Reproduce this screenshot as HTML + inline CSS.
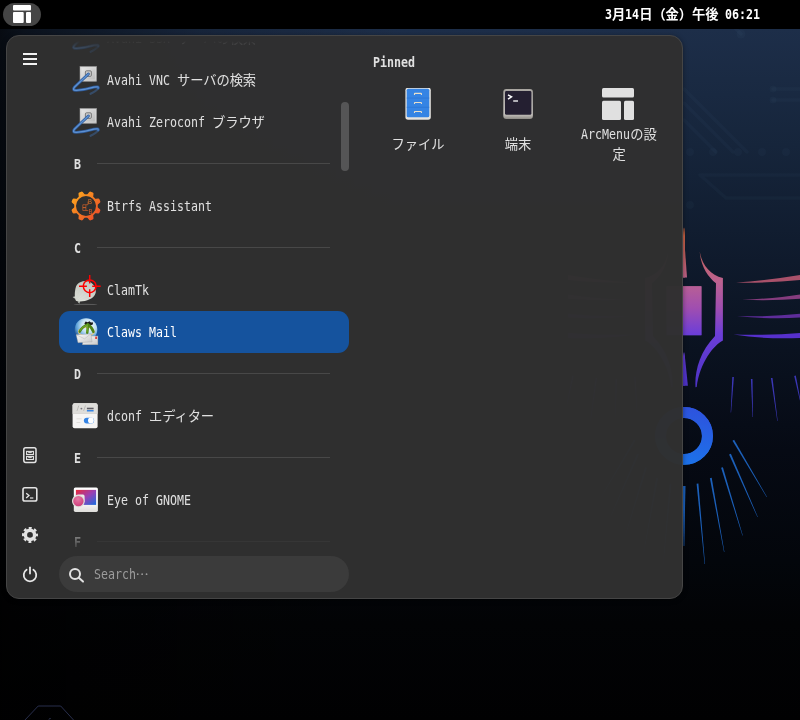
<!DOCTYPE html>
<html lang="ja">
<head>
<meta charset="utf-8">
<title>ArcMenu</title>
<style>
*{box-sizing:border-box;margin:0;padding:0}
html,body{width:800px;height:720px;overflow:hidden;background:#020306}
body{position:relative;font-family:"DejaVu Sans Mono","Liberation Mono","Noto Sans CJK JP",monospace;font-size:13px;color:#e0e0e0}
svg{display:block}
#wall{position:absolute;left:0;top:0;width:800px;height:720px}
.l{display:inline-block;white-space:pre;overflow:visible;line-height:1}
.l i{display:inline-block;font-style:normal;font-size:13.7px;transform:scaleX(0.8487);transform-origin:0 50%;white-space:pre}
.c{font-family:"Noto Sans CJK JP",sans-serif;font-size:13.3px;letter-spacing:-.1px;line-height:1}
#topbar{position:absolute;left:0;top:0;width:800px;height:29px;background:#000}
#actbtn{position:absolute;left:3px;top:3px;width:38px;height:23px;border-radius:12px;background:#454545}
#actbtn svg{position:absolute;left:10px;top:2px}
#clock{will-change:transform;position:absolute;left:605px;top:0;height:29px;line-height:29px;font-weight:bold;color:#fff;white-space:nowrap}
#menu{position:absolute;left:6px;top:35px;width:677px;height:564px;border-radius:13px;background:rgba(48,48,48,.985);border:1px solid #454545;box-shadow:0 1px 5px rgba(0,0,0,.4)}
#side .si{position:absolute;left:22px;width:16px;height:16px}
#list{position:absolute;left:59px;width:290px;overflow:hidden;-webkit-mask-image:linear-gradient(to bottom,rgba(0,0,0,0) 0,#000 26px,#000 calc(100% - 30px),rgba(0,0,0,.15) 100%);mask-image:linear-gradient(to bottom,rgba(0,0,0,0) 0,#000 26px,#000 calc(100% - 30px),rgba(0,0,0,.15) 100%)}
.row{position:absolute;left:0;width:290px;height:42px;border-radius:11px}
.row.sel{background:#15539e}
.row .ic{position:absolute;left:11px;top:5px;width:32px;height:32px}
.row .tx{position:absolute;left:48px;top:1px;height:42px;line-height:42px;white-space:nowrap}
.row.sel .tx{color:#fff}
.hdr{position:absolute;left:0;width:290px;height:42px}
.hdr b{position:absolute;left:14.5px;top:1px;line-height:42px;font-weight:bold}
.hdr s{position:absolute;left:38px;top:20px;width:233px;height:1px;background:#484848}
#sbar{position:absolute;left:341px;top:102px;width:8px;height:69px;border-radius:4px;background:#555556}
#search{will-change:transform;position:absolute;left:59px;top:556px;width:290px;height:36px;border-radius:18px;background:#3b3b3b}
#search .sic{position:absolute;left:9px;top:10.5px;width:16px;height:16px}
#search .ph{position:absolute;left:34.5px;top:1px;line-height:36px;color:#9c9c9c;white-space:nowrap}
#pinned{will-change:transform;position:absolute;left:373px;top:53px;line-height:20px;font-weight:bold;white-space:nowrap}
.pin{will-change:transform;position:absolute;top:80px;width:100px;height:90px}
.pin .pi{position:absolute;left:34px;top:8px;width:32px;height:32px}
.pin .pl{position:absolute;left:0;top:45px;width:100px;text-align:center;line-height:20px;white-space:nowrap}
.pin .pl.one{top:55px}
.pin.p3 .pl{left:1px}

</style>
</head>
<body>
<svg id="wall" viewBox="0 0 800 720">
<defs>
<linearGradient id="bg" gradientUnits="userSpaceOnUse" x1="0" y1="29" x2="0" y2="720">
<stop offset="0" stop-color="#1d2e49"/><stop offset=".168" stop-color="#16253b"/><stop offset=".336" stop-color="#0f1a2c"/><stop offset=".465" stop-color="#0a1220"/><stop offset=".61" stop-color="#060a14"/><stop offset=".77" stop-color="#03060b"/><stop offset=".86" stop-color="#020305"/><stop offset="1" stop-color="#010102"/>
</linearGradient>
<linearGradient id="lf" gradientUnits="userSpaceOnUse" x1="0" y1="0" x2="400" y2="0">
<stop offset="0" stop-color="#000" stop-opacity=".76"/><stop offset=".06" stop-color="#000" stop-opacity=".6"/><stop offset=".25" stop-color="#000" stop-opacity=".42"/><stop offset=".5" stop-color="#000" stop-opacity=".2"/><stop offset="1" stop-color="#000" stop-opacity="0"/>
</linearGradient>
<linearGradient id="pv" gradientUnits="userSpaceOnUse" x1="0" y1="226" x2="0" y2="390">
<stop offset="0" stop-color="#cc6236"/><stop offset=".16" stop-color="#c0605c"/><stop offset=".34" stop-color="#bc6290"/><stop offset=".5" stop-color="#a04eb0"/><stop offset=".66" stop-color="#6c3ed8"/><stop offset="1" stop-color="#4a32c4"/>
</linearGradient>
<linearGradient id="ring" gradientUnits="userSpaceOnUse" x1="690" y1="407" x2="700" y2="465">
<stop offset="0" stop-color="#2d54de"/><stop offset="1" stop-color="#1b74ea"/>
</linearGradient>
</defs>
<rect width="800" height="720" fill="url(#bg)"/>
<rect width="400" height="720" fill="url(#lf)"/>
<g fill="none" stroke="#8fb0e0" stroke-opacity=".03" stroke-width="3.5" stroke-linecap="round">
<path d="M741 34L728 21M684 89L747 152M684 103L733 152M684 120L716 152M773 89H800M773 100H800M700 175H800M700 175L726 198H800"/>
</g>
<g fill="#8fb0e0" fill-opacity=".03">
<circle cx="741" cy="34" r="4.5"/><circle cx="690" cy="152" r="4"/><circle cx="713" cy="152" r="4"/><circle cx="738" cy="152" r="4"/><circle cx="762" cy="152" r="4"/><circle cx="786" cy="152" r="4"/><circle cx="773" cy="89" r="3.5"/><circle cx="773" cy="100" r="3.5"/><circle cx="690" cy="205" r="4"/>
</g>
<g>
<!-- neon figure -->
<g fill="url(#pv)">
<path d="M683 229 L683.4 227.6 L687 277.4 L683 277.4Z"/>
<rect x="666.6" y="286.3" width="34.8" height="48.9"/>
<path d="M699.8 251.5C701.5 264 710 275 722.9 278L722.9 340.5C714 345 700 362 696.7 387L695.5 387.2C694.5 372 699.5 352 715 336L716 283.3C708 277 700.5 266 699.8 251.5Z"/>
<path d="M683 357L684.4 352L687.9 385.8L683 385.8Z"/>
</g>
<path d="M736 282.6Q770 280 800 275L800 280Q770 283.2 736 282.6Z" fill="#a9516a"/>
<path d="M742 299.8Q775 298.5 800 294.5L800 298.8Q775 300.8 742 299.8Z" fill="#853c7e"/>
<path d="M737 316.2Q770 317 800 313.8L800 317.6Q770 319.4 737 316.2Z" fill="#5e2d9a"/>
<path d="M733.5 334.6Q770 335.5 800 333L800 338Q765 339.5 733.5 334.6Z" fill="#5630cc"/>
<circle cx="683.9" cy="435.9" r="23.45" fill="none" stroke="url(#ring)" stroke-width="10.9"/>
<g fill="#3b37b6">
<path d="M732.3 376.9L730.7 412.5L731.1 412.5L733.9 377.1Z"/>
<path d="M750.9 379.0L752.6 417.0L753.0 417.0L752.5 379.0Z"/>
<path d="M770.9 378.1L777.3 421.0L777.7 421.0L772.5 377.9Z"/>
<path d="M794.2 376.0L800.8 404.1L801.2 403.9L795.8 375.6Z"/>
</g>
<g fill="#1c60ba">
<path d="M732.5 440.8L766.6 497.1L767.0 496.9L734.1 439.8Z"/>
<path d="M729.1 454.6L757.4 517.1L757.8 516.9L730.9 453.8Z"/>
<path d="M721.1 467.8L742.4 535.6L742.8 535.4L722.9 467.2Z"/>
<path d="M709.9 478.2L724.0 552.0L724.4 552.0L711.7 477.8Z"/>
<path d="M696.6 483.8L704.6 564.0L705.0 564.0L698.4 483.6Z"/>
<path d="M682.5 486.0L683.8 546.0L684.2 546.0L684.3 486.0Z"/>
</g>
</g>
<g transform="translate(1368 0) scale(-1 1)">
<!-- neon figure -->
<g fill="url(#pv)">
<path d="M683 229 L683.4 227.6 L687 277.4 L683 277.4Z"/>
<rect x="666.6" y="286.3" width="34.8" height="48.9"/>
<path d="M699.8 251.5C701.5 264 710 275 722.9 278L722.9 340.5C714 345 700 362 696.7 387L695.5 387.2C694.5 372 699.5 352 715 336L716 283.3C708 277 700.5 266 699.8 251.5Z"/>
<path d="M683 357L684.4 352L687.9 385.8L683 385.8Z"/>
</g>
<path d="M736 282.6Q770 280 800 275L800 280Q770 283.2 736 282.6Z" fill="#a9516a"/>
<path d="M742 299.8Q775 298.5 800 294.5L800 298.8Q775 300.8 742 299.8Z" fill="#853c7e"/>
<path d="M737 316.2Q770 317 800 313.8L800 317.6Q770 319.4 737 316.2Z" fill="#5e2d9a"/>
<path d="M733.5 334.6Q770 335.5 800 333L800 338Q765 339.5 733.5 334.6Z" fill="#5630cc"/>
<circle cx="683.9" cy="435.9" r="23.45" fill="none" stroke="url(#ring)" stroke-width="10.9"/>
<g fill="#3b37b6">
<path d="M732.3 376.9L730.7 412.5L731.1 412.5L733.9 377.1Z"/>
<path d="M750.9 379.0L752.6 417.0L753.0 417.0L752.5 379.0Z"/>
<path d="M770.9 378.1L777.3 421.0L777.7 421.0L772.5 377.9Z"/>
<path d="M794.2 376.0L800.8 404.1L801.2 403.9L795.8 375.6Z"/>
</g>
<g fill="#1c60ba">
<path d="M732.5 440.8L766.6 497.1L767.0 496.9L734.1 439.8Z"/>
<path d="M729.1 454.6L757.4 517.1L757.8 516.9L730.9 453.8Z"/>
<path d="M721.1 467.8L742.4 535.6L742.8 535.4L722.9 467.2Z"/>
<path d="M709.9 478.2L724.0 552.0L724.4 552.0L711.7 477.8Z"/>
<path d="M696.6 483.8L704.6 564.0L705.0 564.0L698.4 483.6Z"/>
<path d="M682.5 486.0L683.8 546.0L684.2 546.0L684.3 486.0Z"/>
</g>
</g>

<path d="M24.5 720.5 L38.2 706 L60.7 706 L74 720.5" fill="none" stroke="#353e66" stroke-width=".75"/>
<path d="M49 719.5 L50.5 718" stroke="#39436a" stroke-width="1"/>
</svg>

<div id="topbar"><div id="actbtn"><svg width="18" height="19" viewBox="0 0 18 19"><g fill="#fff"><rect x="0" y="0" width="18" height="5.4" rx="1"/><rect x="0" y="7.1" width="10.7" height="11" rx="1"/><rect x="13" y="7.1" width="5" height="11" rx="1"/></g></svg></div><div id="clock"><span class="l" style="width:7px"><i>3</i></span><span class="c">月</span><span class="l" style="width:14px"><i>14</i></span><span class="c">日（金）午後</span><span class="l" style="width:42px"><i> 06:21</i></span></div></div>
<div id="menu"></div>
<div id="side">
<div class="si" style="top:51px"><svg width="16" height="16" viewBox="0 0 16 16"><g fill="#f2f2f2"><rect x="1" y="2" width="14" height="2"/><rect x="1" y="7" width="14" height="2"/><rect x="1" y="12" width="14" height="2"/></g></svg></div>
<div class="si" style="top:447px"><svg width="16" height="17" viewBox="0 0 16 17"><g fill="none" stroke="#e4e4e4"><rect x="1.8" y="0.8" width="12.2" height="14.6" rx="1.8" stroke-width="1.5"/><rect x="4.6" y="4.4" width="6.8" height="3.1" stroke-width="1.1"/><rect x="4.6" y="9.4" width="6.8" height="3.1" stroke-width="1.1"/><path d="M6.6 4.6v1h2.8v-1M6.6 9.6v1h2.8v-1" stroke-width="1"/></g></svg></div>
<div class="si" style="top:487px"><svg width="16" height="16" viewBox="0 0 16 16"><g fill="none" stroke="#e4e4e4"><rect x="1" y="0.8" width="13.8" height="13.2" rx="1.8" stroke-width="1.6"/><path d="M4.2 6.2L7 8.6L4.2 11" stroke-width="1.3"/><path d="M8 11h3.3" stroke-width="1.2"/></g></svg></div>
<div class="si" style="top:527px"><svg width="16" height="16" viewBox="0 0 16 16"><g fill="none" stroke="#e2e2e2"><circle cx="8" cy="7.9" r="4.6" stroke-width="3.4"/><circle cx="8" cy="7.9" r="6.9" stroke-width="2.2" stroke-dasharray="2.9 2.52" stroke-dashoffset="1.45"/></g></svg></div>
<div class="si" style="top:566px"><svg width="16" height="17" viewBox="0 0 16 17"><g fill="none" stroke="#e6e6e6" stroke-width="1.8" stroke-linecap="round"><path d="M8 1.3V7.6"/><path d="M4.6 3.8A6.25 6.25 0 1 0 11.4 3.8"/></g></svg></div>
</div>
<div id="list" style="top:41px;height:506px">
<div class="row" style="top:-24px"><div class="ic"><svg width="32" height="32" viewBox="0 0 32 32"><defs><linearGradient id="avg" x1="0" y1="0" x2="1" y2="1"><stop offset="0" stop-color="#ececec"/><stop offset="1" stop-color="#b4b4b4"/></linearGradient><linearGradient id="avt" gradientUnits="userSpaceOnUse" x1="28" y1="24" x2="20" y2="30"><stop offset="0" stop-color="#fff"/><stop offset="1" stop-color="#fff" stop-opacity="0"/></linearGradient><mask id="avm"><rect width="32" height="32" fill="#fff"/><path d="M29 22L18 31L32 32Z" fill="#000" opacity=".0"/></mask></defs><rect x="10" y="2.5" width="16.6" height="14.8" fill="url(#avg)" stroke="#9a9a9a" stroke-width=".6"/><rect x="11.3" y="3.8" width="14" height="12.2" fill="none" stroke="#d8d8d8" stroke-width=".8"/><rect x="15.4" y="6.8" width="6" height="5.6" rx="1.2" fill="#c8c8c8" stroke="#707070" stroke-width=".9"/><path d="M18.4 10L4.6 23Q1.6 26.6 6.5 26.4Q16 25.6 24 23.2Q28.8 22.2 28.2 24" fill="none" stroke="#2f5c9c" stroke-width="2.9" stroke-linecap="round"/><path d="M18.4 10L4.6 23Q1.6 26.6 6.5 26.4Q16 25.6 24 23.2Q28.8 22.2 28.2 24" fill="none" stroke="#5d91d2" stroke-width="1.3" stroke-linecap="round"/><path d="M28.2 24Q26.4 27.2 20.6 29.8" fill="none" stroke="#3f6eae" stroke-width="2.2" stroke-linecap="round" opacity=".45"/></svg></div><div class="tx"><span class="l" style="width:70px"><i>Avahi SSH </i></span><span class="c">サーバの検索</span></div></div>
<div class="row" style="top:18px"><div class="ic"><svg width="32" height="32" viewBox="0 0 32 32"><defs><linearGradient id="avg" x1="0" y1="0" x2="1" y2="1"><stop offset="0" stop-color="#ececec"/><stop offset="1" stop-color="#b4b4b4"/></linearGradient><linearGradient id="avt" gradientUnits="userSpaceOnUse" x1="28" y1="24" x2="20" y2="30"><stop offset="0" stop-color="#fff"/><stop offset="1" stop-color="#fff" stop-opacity="0"/></linearGradient><mask id="avm"><rect width="32" height="32" fill="#fff"/><path d="M29 22L18 31L32 32Z" fill="#000" opacity=".0"/></mask></defs><rect x="10" y="2.5" width="16.6" height="14.8" fill="url(#avg)" stroke="#9a9a9a" stroke-width=".6"/><rect x="11.3" y="3.8" width="14" height="12.2" fill="none" stroke="#d8d8d8" stroke-width=".8"/><rect x="15.4" y="6.8" width="6" height="5.6" rx="1.2" fill="#c8c8c8" stroke="#707070" stroke-width=".9"/><path d="M18.4 10L4.6 23Q1.6 26.6 6.5 26.4Q16 25.6 24 23.2Q28.8 22.2 28.2 24" fill="none" stroke="#2f5c9c" stroke-width="2.9" stroke-linecap="round"/><path d="M18.4 10L4.6 23Q1.6 26.6 6.5 26.4Q16 25.6 24 23.2Q28.8 22.2 28.2 24" fill="none" stroke="#5d91d2" stroke-width="1.3" stroke-linecap="round"/><path d="M28.2 24Q26.4 27.2 20.6 29.8" fill="none" stroke="#3f6eae" stroke-width="2.2" stroke-linecap="round" opacity=".45"/></svg></div><div class="tx"><span class="l" style="width:70px"><i>Avahi VNC </i></span><span class="c">サーバの検索</span></div></div>
<div class="row" style="top:60px"><div class="ic"><svg width="32" height="32" viewBox="0 0 32 32"><defs><linearGradient id="avg" x1="0" y1="0" x2="1" y2="1"><stop offset="0" stop-color="#ececec"/><stop offset="1" stop-color="#b4b4b4"/></linearGradient><linearGradient id="avt" gradientUnits="userSpaceOnUse" x1="28" y1="24" x2="20" y2="30"><stop offset="0" stop-color="#fff"/><stop offset="1" stop-color="#fff" stop-opacity="0"/></linearGradient><mask id="avm"><rect width="32" height="32" fill="#fff"/><path d="M29 22L18 31L32 32Z" fill="#000" opacity=".0"/></mask></defs><rect x="10" y="2.5" width="16.6" height="14.8" fill="url(#avg)" stroke="#9a9a9a" stroke-width=".6"/><rect x="11.3" y="3.8" width="14" height="12.2" fill="none" stroke="#d8d8d8" stroke-width=".8"/><rect x="15.4" y="6.8" width="6" height="5.6" rx="1.2" fill="#c8c8c8" stroke="#707070" stroke-width=".9"/><path d="M18.4 10L4.6 23Q1.6 26.6 6.5 26.4Q16 25.6 24 23.2Q28.8 22.2 28.2 24" fill="none" stroke="#2f5c9c" stroke-width="2.9" stroke-linecap="round"/><path d="M18.4 10L4.6 23Q1.6 26.6 6.5 26.4Q16 25.6 24 23.2Q28.8 22.2 28.2 24" fill="none" stroke="#5d91d2" stroke-width="1.3" stroke-linecap="round"/><path d="M28.2 24Q26.4 27.2 20.6 29.8" fill="none" stroke="#3f6eae" stroke-width="2.2" stroke-linecap="round" opacity=".45"/></svg></div><div class="tx"><span class="l" style="width:105px"><i>Avahi Zeroconf </i></span><span class="c">ブラウザ</span></div></div>
<div class="hdr" style="top:102px"><b><span class="l" style="width:7px"><i>B</i></span></b><s></s></div>
<div class="row" style="top:144px"><div class="ic"><svg width="32" height="32" viewBox="0 0 32 32"><defs><linearGradient id="btg" gradientUnits="userSpaceOnUse" x1="4" y1="4" x2="28" y2="28"><stop offset="0" stop-color="#fca61e"/><stop offset="1" stop-color="#ec4c28"/></linearGradient></defs><path d="M16.84 5.09L19.27 2.09Q19.89 1.38 20.72 1.72L22.76 2.56Q23.59 2.91 23.52 3.85L23.12 7.69ZM24.31 8.88L28.15 8.48Q29.09 8.41 29.44 9.24L30.28 11.28Q30.62 12.11 29.91 12.73L26.91 15.16ZM26.91 16.84L29.91 19.27Q30.62 19.89 30.28 20.72L29.44 22.76Q29.09 23.59 28.15 23.52L24.31 23.12ZM23.12 24.31L23.52 28.15Q23.59 29.09 22.76 29.44L20.72 30.28Q19.89 30.62 19.27 29.91L16.84 26.91ZM15.16 26.91L12.73 29.91Q12.11 30.62 11.28 30.28L9.24 29.44Q8.41 29.09 8.48 28.15L8.88 24.31ZM7.69 23.12L3.85 23.52Q2.91 23.59 2.56 22.76L1.72 20.72Q1.38 19.89 2.09 19.27L5.09 16.84ZM5.09 15.16L2.09 12.73Q1.38 12.11 1.72 11.28L2.56 9.24Q2.91 8.41 3.85 8.48L7.69 8.88ZM8.88 7.69L8.48 3.85Q8.41 2.91 9.24 2.56L11.28 1.72Q12.11 1.38 12.73 2.09L15.16 5.09Z" fill="url(#btg)"/><circle cx="16" cy="16" r="10.9" fill="none" stroke="url(#btg)" stroke-width="1.8"/><g fill="none" stroke="#ee6c2a" stroke-width=".55"><path d="M12.8 14.7h3.1v2.9h-3.1zM12.8 17.6h3.1v2.9h-3.1zM15.9 14.7h2.1v-3.2M15.9 20.5h2.4"/></g><text transform="translate(18.1 14.2) scale(.78 1)" font-family="Liberation Sans,sans-serif" font-size="7.6" fill="#f27a26" opacity=".9">B</text><text transform="translate(18.4 23.9) scale(.78 1)" font-family="Liberation Sans,sans-serif" font-size="7.6" fill="#ee6026" opacity=".9">B</text></svg></div><div class="tx"><span class="l" style="width:105px"><i>Btrfs Assistant</i></span></div></div>
<div class="hdr" style="top:186px"><b><span class="l" style="width:7px"><i>C</i></span></b><s></s></div>
<div class="row" style="top:228px"><div class="ic"><svg width="32" height="32" viewBox="0 0 32 32"><defs><radialGradient id="clg" cx=".3" cy=".95" r="1"><stop offset="0" stop-color="#dfe1db"/><stop offset="1" stop-color="#c2c6be"/></radialGradient></defs><ellipse cx="15.5" cy="30.4" rx="12" ry=".7" fill="#999" opacity=".4"/><path d="M2.6 23l2.8-.8v2.8zM7.4 27.6l2.6-.6-.6 2.8z" fill="#c4c8c0"/><path d="M15 7C22 6.4 27 14 25.6 19C24 26 12 28.6 6.4 27C4.4 26 4.2 18 6 12.4C7.4 9 11 7.3 15 7Z" fill="url(#clg)"/><g fill="none" stroke="#ccd0c8" stroke-width=".5" opacity=".7"><path d="M6 26L12 9M6.4 26.4L18 9M7 26.8L23 13M8 27L25 19"/></g><g fill="none" stroke="#f00" stroke-width="1.45"><circle cx="19.7" cy="12.3" r="6.4"/><path d="M9 12.3h7.9M22.2 12.3h8.5M19.7 1v8.4M19.7 15.2v7.8"/></g></svg></div><div class="tx"><span class="l" style="width:42px"><i>ClamTk</i></span></div></div>
<div class="row sel" style="top:270px"><div class="ic"><svg width="32" height="32" viewBox="0 0 32 32"><defs><radialGradient id="cwg" cx=".62" cy=".32" r=".78"><stop offset="0" stop-color="#ffffff"/><stop offset=".4" stop-color="#c4e2f4"/><stop offset=".7" stop-color="#5aa0d8"/><stop offset="1" stop-color="#0c2a66"/></radialGradient><linearGradient id="cwe" x1="0" y1="0" x2="1" y2="1"><stop offset="0" stop-color="#fcfcfc"/><stop offset="1" stop-color="#c8c8c8"/></linearGradient></defs><circle cx="16" cy="13.6" r="11.3" fill="url(#cwg)"/><path d="M14.4 7.6l1.2-2 2.2.6 1.6-1 1.6 1.2 1.8-.2.2 2-2.4 1.4-5-.4z" fill="#1c1c1c"/><ellipse cx="16.4" cy="15.6" rx="8" ry="4.2" fill="none" stroke="#e2c47a" stroke-width="1.1"/><g fill="none" stroke="#4e8416" stroke-width="2.5" stroke-linecap="round"><path d="M17.6 8.6Q12 10.6 9.8 15.6"/><path d="M17.8 8.6Q17.8 13 17.2 16.8"/><path d="M18 8.6Q22 11 23.4 15.8"/></g><g fill="none" stroke="#8cc63a" stroke-width=".8" stroke-linecap="round" opacity=".8"><path d="M17 8.8Q12 10.6 10 14.6"/><path d="M17.4 9Q17.4 13 17 16"/></g><rect x="12.6" y="20" width="15.3" height="8.8" fill="url(#cwe)" stroke="#9a9a9a" stroke-width=".4"/><rect x="25.2" y="20.6" width="1.8" height="2.4" fill="#e0403a"/><path d="M6.2 18.8L20.9 17.9L22.1 25.8L8 26.7Z" fill="url(#cwe)" stroke="#a0a0a0" stroke-width=".4"/><path d="M6.2 18.8l8.4 4 6.3-4.9" fill="none" stroke="#b4b4b4" stroke-width=".5"/></svg></div><div class="tx"><span class="l" style="width:70px"><i>Claws Mail</i></span></div></div>
<div class="hdr" style="top:312px"><b><span class="l" style="width:7px"><i>D</i></span></b><s></s></div>
<div class="row" style="top:354px"><div class="ic"><svg width="32" height="32" viewBox="0 0 32 32"><rect x="2.6" y="3.2" width="25" height="25" rx="2" fill="#f6f5f4"/><path d="M2.6 13.6V5.2a2 2 0 0 1 2-2h21a2 2 0 0 1 2 2v8.4z" fill="#deddda"/><rect x="2.6" y="13.3" width="25" height=".6" fill="#cfcdc9"/><path d="M8.8 5.6L7 10.9M15.5 5.6L13.6 10.9" stroke="#b4b2ae" stroke-width=".8" fill="none"/><circle cx="11.4" cy="8.6" r=".95" fill="#77767b"/><rect x="16.9" y="7.7" width="6.7" height="1.6" fill="#5e5c64"/><rect x="16.9" y="10" width="6.7" height="1.5" fill="#3584e4"/><rect x="6.5" y="18.4" width="5.2" height=".9" fill="#deddda"/><rect x="6.5" y="22" width="3.8" height=".9" fill="#deddda"/><rect x="13.9" y="17.7" width="10.2" height="5.7" rx="2.85" fill="#3584e4"/><circle cx="20.9" cy="20.5" r="2.9" fill="#fff"/></svg></div><div class="tx"><span class="l" style="width:42px"><i>dconf </i></span><span class="c">エディター</span></div></div>
<div class="hdr" style="top:396px"><b><span class="l" style="width:7px"><i>E</i></span></b><s></s></div>
<div class="row" style="top:438px"><div class="ic"><svg width="32" height="32" viewBox="0 0 32 32"><defs><linearGradient id="eog1" x1="0" y1="0" x2="1" y2="1"><stop offset="0" stop-color="#ea2a3a"/><stop offset=".5" stop-color="#9a40b4"/><stop offset="1" stop-color="#176ee0"/></linearGradient><linearGradient id="eog2" x1="0" y1="0" x2="0" y2="1"><stop offset="0" stop-color="#ffffff"/><stop offset=".7" stop-color="#f6f5f4"/><stop offset="1" stop-color="#deddda"/></linearGradient><radialGradient id="eog3" cx=".45" cy=".3" r=".7"><stop offset="0" stop-color="#e57aa4"/><stop offset="1" stop-color="#cf3d7c"/></radialGradient></defs><rect x="3.8" y="3.5" width="24.1" height="24.4" rx="1.6" fill="url(#eog2)"/><rect x="5.9" y="5.9" width="20.2" height="15" fill="url(#eog1)"/><path d="M8.4 10.6h4.6a1.6 1.6 0 0 1 1.6 1.6v5a6.2 6.2 0 1 1-6.2-6.6z" fill="#ecebe8"/><circle cx="8.4" cy="17.2" r="6.2" fill="#dedcd8"/><circle cx="8.4" cy="17.1" r="5.2" fill="url(#eog3)"/></svg></div><div class="tx"><span class="l" style="width:84px"><i>Eye of GNOME</i></span></div></div>
<div class="hdr" style="top:480px"><b><span class="l" style="width:7px"><i>F</i></span></b><s></s></div>
</div>
<div id="sbar"></div>
<div id="search"><div class="sic"><svg width="17" height="17" viewBox="0 0 17 17"><g fill="none" stroke="#e2e2e2" stroke-width="2"><circle cx="7" cy="7" r="5"/><path d="M10.8 10.8L15 14.6" stroke-linecap="round"/></g></svg></div><div class="ph"><span class="l" style="width:42px"><i>Search</i></span><span class="c">…</span></div></div>
<div id="pinned"><span class="l" style="width:42px"><i>Pinned</i></span></div>
<div class="pin" style="left:368px"><div class="pi"><svg width="32" height="32" viewBox="0 0 32 32"><rect x="3.4" y="-.3" width="25.4" height="32" rx="2.6" fill="#e6e4e0"/><rect x="4.7" y=".7" width="22.6" height="28.6" rx="1.6" fill="#3584e4"/><path d="M4.7 10.1h22.6M4.7 19.3h22.6" stroke="#2a74d2" stroke-width=".7"/><g fill="none" stroke="#e8dfca" stroke-width="1.1"><path d="M12.5 6.9v-1.1q0-.4.4-.4h6.1q.4 0 .4.4v1.1"/><path d="M12.5 16v-1.1q0-.4.4-.4h6.1q.4 0 .4.4v1.1"/><path d="M12.5 25v-1.1q0-.4.4-.4h6.1q.4 0 .4.4v1.1"/></g></svg></div><div class="pl one"><span class="c">ファイル</span></div></div>
<div class="pin" style="left:468px"><div class="pi"><svg width="32" height="32" viewBox="0 0 32 32"><defs><linearGradient id="tmg" x1="0" y1="0" x2="0" y2="1"><stop offset="0" stop-color="#a8a5a0"/><stop offset=".85" stop-color="#c4c1bc"/><stop offset="1" stop-color="#8e8b86"/></linearGradient></defs><rect x="1.3" y=".9" width="29.6" height="30" rx="3" fill="url(#tmg)"/><rect x="3" y="3" width="26.4" height="23.8" rx="1.4" fill="#241f31"/><path d="M6 6.8L9.6 8.9L6 11.2" fill="none" stroke="#fff" stroke-width="1.4"/><path d="M11.2 13h4.8" stroke="#fff" stroke-width="1.3"/></svg></div><div class="pl one"><span class="c">端末</span></div></div>
<div class="pin p3" style="left:568px"><div class="pi"><svg width="32" height="32" viewBox="0 0 32 32"><g fill="#e0e0e0"><rect x="0" y="0" width="32" height="9.5" rx="1.5"/><rect x="0" y="12.8" width="19" height="19.2" rx="1.5"/><rect x="22" y="12.8" width="10" height="19.2" rx="1.5"/></g></svg></div><div class="pl"><span class="l" style="width:49px"><i>ArcMenu</i></span><span class="c">の設</span><br><span class="c">定</span></div></div>
</body>
</html>
